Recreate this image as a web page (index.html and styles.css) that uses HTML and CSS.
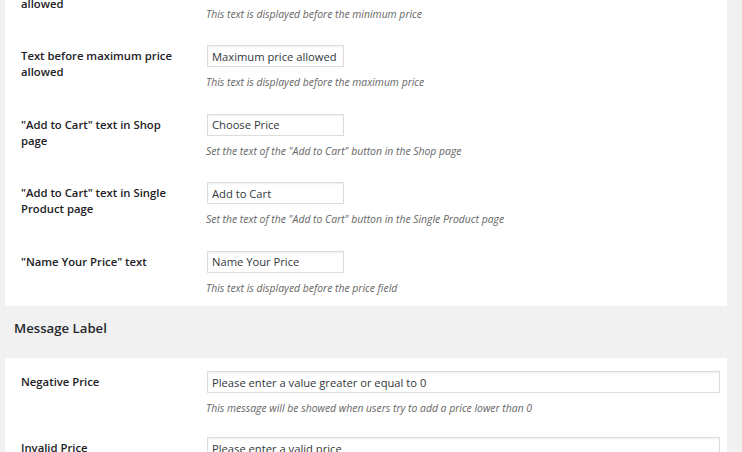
FILE: index.html
```html
<!DOCTYPE html>
<html>
<head>
<meta charset="utf-8">
<link rel="stylesheet" href="styles.css">
</head>
<body>
<div class="page">
  <div class="panel">
    <div class="row">
      <div class="label">Text before minimum price allowed</div>
      <div class="field">
        <input class="input small" type="text" value="Minimum price allowed">
        <p class="desc">This text is displayed before the minimum price</p>
      </div>
    </div>
    <div class="row">
      <div class="label">Text before maximum price allowed</div>
      <div class="field">
        <input class="input small" type="text" value="Maximum price allowed">
        <p class="desc">This text is displayed before the maximum price</p>
      </div>
    </div>
    <div class="row">
      <div class="label">"Add to Cart" text in Shop page</div>
      <div class="field">
        <input class="input small" type="text" value="Choose Price">
        <p class="desc">Set the text of the "Add to Cart" button in the Shop page</p>
      </div>
    </div>
    <div class="row">
      <div class="label">"Add to Cart" text in Single Product page</div>
      <div class="field">
        <input class="input small" type="text" value="Add to Cart">
        <p class="desc">Set the text of the "Add to Cart" button in the Single Product page</p>
      </div>
    </div>
    <div class="row">
      <div class="label">"Name Your Price" text</div>
      <div class="field">
        <input class="input small" type="text" value="Name Your Price">
        <p class="desc">This text is displayed before the price field</p>
      </div>
    </div>
  </div>

  <h2 class="heading">Message Label</h2>

  <div class="panel panel-wide">
    <div class="row">
      <div class="label">Negative Price</div>
      <div class="field">
        <input class="input wide" type="text" value="Please enter a value greater or equal to 0">
        <p class="desc">This message will be showed when users try to add a price lower than 0</p>
      </div>
    </div>
    <div class="row">
      <div class="label">Invalid Price</div>
      <div class="field">
        <input class="input wide" type="text" value="Please enter a valid price">
        <p class="desc">This message will be showed when users enter an invalid price</p>
      </div>
    </div>
  </div>
</div>
</body>
</html>
```

FILE: styles.css
```css
html, body {
  margin: 0;
  padding: 0;
  background: #f1f1f1;
  font-family: "Open Sans", "Liberation Sans", sans-serif;
  color: #23282d;
  overflow: hidden;
}

.page {
  margin-top: -34.5px;
  padding: 0 15px 0 5px;
}

.panel {
  background: #fff;
  padding: 11px 7px 10px 16px;
  display: flex;
  flex-direction: column;
  gap: 23.5px;
}

.panel-wide {
  padding-top: 13px;
  gap: 21px;
}

.row {
  display: flex;
  align-items: flex-start;
}

.label {
  width: 158px;
  margin-right: 28px;
  flex: none;
  font-size: 11.3px;
  font-weight: 600;
  line-height: 16px;
  padding-top: 3px;
  color: #1d2125;
}

.field {
  flex: 1;
  min-width: 0;
}

.input {
  display: block;
  box-sizing: border-box;
  height: 22px;
  margin: 0;
  padding: 0 4px;
  border: 1px solid #dddddd;
  box-shadow: inset 0 1px 2px rgba(0, 0, 0, 0.07);
  background: #fff;
  font-family: "Open Sans", "Liberation Sans", sans-serif;
  font-size: 11.2px;
  line-height: 20px;
  color: #32373c;
  outline: none;
}

.small {
  width: 137px;
}

.wide {
  width: 100%;
}

.desc {
  margin: 8px 0 0 -1px;
  font-size: 10.4px;
  font-style: italic;
  line-height: 15px;
  color: #666;
}

.heading {
  margin: 13.5px 0 21px 9px;
  font-size: 13.2px;
  font-weight: 600;
  line-height: 18px;
  color: #23282d;
}
```
